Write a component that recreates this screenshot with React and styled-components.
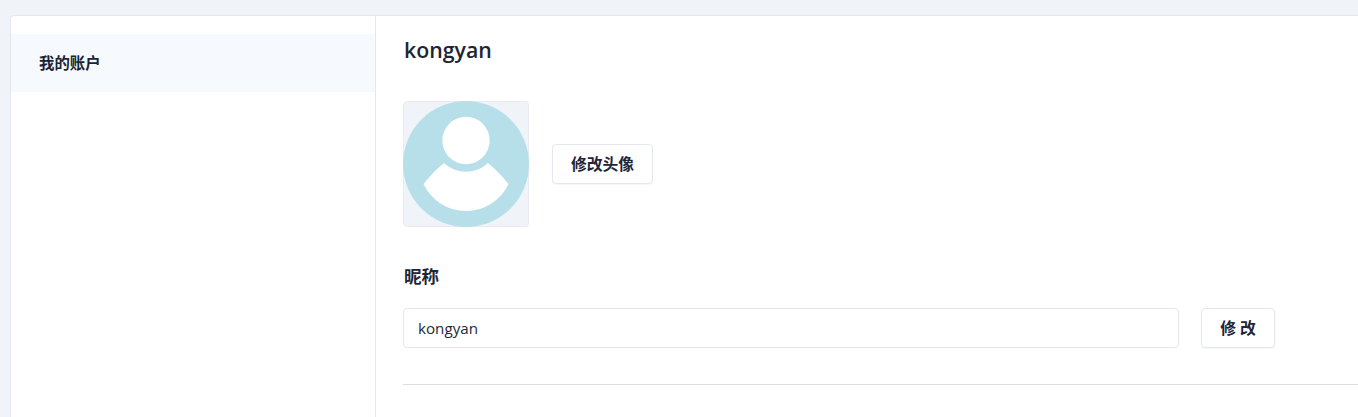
import React from "react";
import styled, { createGlobalStyle } from "styled-components";

const Global = createGlobalStyle`
  html, body { margin: 0; padding: 0; height: 100%; overflow: hidden; background: #f0f3f8; }
  body { font-family: "Open Sans", "Noto Sans CJK SC", sans-serif; color: #1f2937; }
  #root { height: 100%; }
`;
const Page = styled.div`
  height: 417px;
  box-sizing: border-box;
  padding: 15px 0 0 10px;
  overflow: hidden;
`;
const Card = styled.div`
  display: flex;
  height: 420px;
  width: 1360px;
  box-sizing: border-box;
  background: #fff;
  border: 1px solid #e4e7ec;
  border-right: none;
  border-bottom: none;
  border-radius: 4px 0 0 0;
`;
const Sidebar = styled.nav`
  width: 365px;
  flex: none;
  box-sizing: border-box;
  padding-top: 18px;
  border-right: 1px solid #e4e7ec;
`;
const MenuItem = styled.div`
  height: 58px;
  box-sizing: border-box;
  display: flex;
  align-items: center;
  padding: 2px 0 0 28px;
  background: #f6f9fe;
  font-size: 15.4px;
  line-height: 24px;
  font-weight: 700;
  color: #1a2433;
`;
const Main = styled.main`
  width: 982px;
  flex: none;
  box-sizing: border-box;
  padding-left: 27px;
`;
const Title = styled.h1`
  margin: 18px 0 0;
  padding-left: 1px;
  height: 32px;
  line-height: 32px;
  font-size: 21.3px;
  font-weight: 600;
  color: #1e2533;
`;
const AvatarRow = styled.div`
  display: flex;
  align-items: center;
  gap: 23px;
  margin-top: 35px;
`;
const AvatarBox = styled.div`
  width: 126px;
  height: 126px;
  box-sizing: border-box;
  background: #f0f3f8;
  border: 1px solid #e8ebf0;
  border-radius: 4px;
`;
const Avatar = styled.svg`
  display: block;
  width: 126px;
  height: 126px;
  margin: -1px;
`;
const Button = styled.button`
  height: 40px;
  box-sizing: border-box;
  padding: 0 0 2px;
  width: ${(p) => p.$width}px;
  background: #fff;
  border: 1px solid #e4e7ec;
  border-radius: 4px;
  box-shadow: 0 1px 1px rgba(30, 40, 60, 0.04);
  font-family: inherit;
  font-size: 15.8px;
  font-weight: 700;
  color: #1f2637;
`;
const FieldLabel = styled.h2`
  margin: 37px 0 0;
  padding-left: 1px;
  height: 24px;
  line-height: 24px;
  font-size: 17.5px;
  font-weight: 700;
  color: #1e2533;
`;
const FieldRow = styled.div`
  display: flex;
  gap: 22px;
  margin-top: 20px;
`;
const NameInput = styled.input`
  width: 776px;
  height: 40px;
  box-sizing: border-box;
  padding: 0 15px 0 14px;
  background: #fff;
  border: 1px solid #e4e7ec;
  border-radius: 4px;
  outline: none;
  font-family: inherit;
  font-size: 15.2px;
  color: #1f2937;
`;
const Divider = styled.hr`
  margin: 36px 0 0;
  border: none;
  border-top: 1px solid #dcdcdc;
`;

export default function App() {
  return (
    <>
      <Global />
      <Page>
        <Card>
          <Sidebar>
            <MenuItem>我的账户</MenuItem>
          </Sidebar>
          <Main>
            <Title>kongyan</Title>
            <AvatarRow>
              <AvatarBox>
                <Avatar viewBox="0 0 126 126">
                  <circle cx="63" cy="63" r="63" fill="#b7dfea" />
                  <circle cx="63" cy="39.5" r="23.7" fill="#fff" />
                  <path d="M41 62 A32 32 0 0 0 85 62 Q96 71 105.5 83 A47 47 0 0 1 20.5 83 Q30 71 41 62 Z" fill="#fff" />
                </Avatar>
              </AvatarBox>
              <Button $width={101}>修改头像</Button>
            </AvatarRow>
            <FieldLabel>昵称</FieldLabel>
            <FieldRow>
              <NameInput readOnly value="kongyan" />
              <Button $width={74}>修 改</Button>
            </FieldRow>
            <Divider />
          </Main>
        </Card>
      </Page>
    </>
  );
}
